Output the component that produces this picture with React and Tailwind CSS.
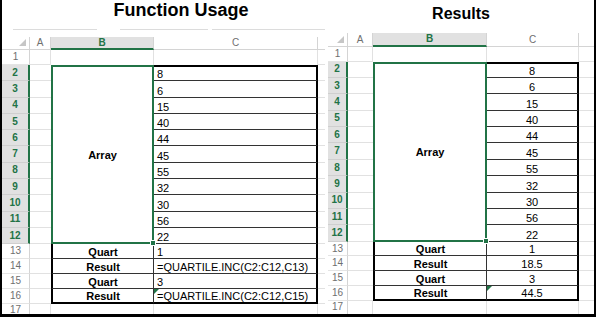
const nums = ['8', '6', '15', '40', '44', '45', '55', '32', '30', '56', '22'];

function RowHead({ n, selected, top }) {
  if (selected) {
    return (
      <div className="flex items-center justify-center bg-[#e1e1e1] border-r-2 border-r-[#217346] border-b border-b-[#cfcfcf] text-[10px] leading-[10px] font-bold text-[#217346]">
        {n}
      </div>
    );
  }
  return (
    <div
      className={`flex justify-center border-r border-r-[#d4d4d4] border-b border-b-[#e4e4e4] text-[10px] leading-[10px] text-[#6f6f6f] ${
        top ? 'items-start pt-px' : 'items-center'
      }`}
    >
      {n}
    </div>
  );
}

function ColHead({ label, selected }) {
  return selected ? (
    <div className="flex items-center justify-center bg-[#e1e1e1] border-r border-r-[#d4d4d4] border-b-2 border-b-[#217346] text-[10px] font-bold text-[#217346]">
      {label}
    </div>
  ) : (
    <div className="flex items-center justify-center border-r border-r-[#d4d4d4] border-b border-b-[#d4d4d4] text-[10px] text-[#6f6f6f]">
      {label}
    </div>
  );
}

function Sheet({ grid, extra, center }) {
  const pos = center ? 'justify-center' : 'justify-start pl-[3px]';
  return (
    <div className={`grid shrink-0 ${grid} text-[11px] leading-[12px] text-black`}>
      <div className="flex items-end justify-end pr-[3px] pb-[3px] border-r border-b border-[#d4d4d4]">
        <svg width="7" height="7" viewBox="0 0 7 7">
          <polygon points="7,0 7,7 0,7" fill="#c6c6c6" />
        </svg>
      </div>
      <ColHead label="A" />
      <ColHead label="B" selected />
      <ColHead label="C" />
      <div className="border-b border-b-[#d4d4d4]" />

      <RowHead n={1} />
      <div className="border-r border-b border-[#e1e1e1]" />
      <div className="border-r border-r-[#e1e1e1]" />
      <div className="border-r border-r-[#e1e1e1]" />
      <div className="border-b border-b-[#e1e1e1]" />

      {nums.map((v, i) => (
        <Row2 key={v + i} i={i} v={v} pos={pos} />
      ))}

      {extra.map(([label, value], i) => (
        <Extra key={i} n={13 + i} label={label} value={value} last={i === extra.length - 1} pos={pos} />
      ))}

      <RowHead n={17} top />
      <div className="border-r border-r-[#e1e1e1]" />
      <div className="border-r border-r-[#e1e1e1]" />
      <div className="border-r border-r-[#e1e1e1]" />
      <div />
    </div>
  );
}

function Row2({ i, v, pos }) {
  return (
    <>
      <RowHead n={i + 2} selected />
      <div className="border-b border-b-[#e1e1e1]" />
      {i === 0 && (
        <div className="relative row-span-11 flex items-center justify-center border-2 border-[#217346] font-bold">
          Array
          <span className="absolute -bottom-[4px] -right-[4px] w-[6px] h-[6px] bg-[#217346] border border-white" />
        </div>
      )}
      <div
        className={`flex items-end ${pos} border-r-2 border-r-black border-b border-b-[#333] ${
          i === 0 ? 'border-t-2 border-t-black' : ''
        }`}
      >
        {v}
      </div>
      <div className="border-b border-b-[#e1e1e1]" />
    </>
  );
}

function Extra({ n, label, value, last, pos }) {
  return (
    <>
      <RowHead n={n} />
      <div className="border-b border-b-[#e1e1e1]" />
      <div
        className={`flex items-end justify-center font-bold border-l-2 border-l-black border-r border-r-[#333] ${
          last ? 'border-b-2 border-b-black' : 'border-b border-b-[#333]'
        }`}
      >
        {label}
      </div>
      <div
        className={`relative flex items-end ${pos} border-r-2 border-r-black ${
          last ? 'border-b-2 border-b-black' : 'border-b border-b-[#333]'
        }`}
      >
        {last && (
          <svg className="absolute top-0 left-0" width="5" height="5" viewBox="0 0 5 5">
            <polygon points="0,0 5,0 0,5" fill="#217346" />
          </svg>
        )}
        {value}
      </div>
      <div className="border-b border-b-[#e1e1e1]" />
    </>
  );
}

export default function App() {
  return (
    <div className="w-[596px] h-[319px] bg-white">
      <div className="flex w-[596px] h-[317px] border-x-2 border-b-[3px] border-black overflow-hidden font-['Liberation_Sans',Arial,sans-serif]">
        <div className="w-[323px] flex flex-col overflow-hidden">
          <div className="h-[29px] shrink-0 pl-[35px] pt-px text-center text-[18px] leading-[18px] font-bold text-black">
            Function Usage
          </div>
          <div className="flex h-px shrink-0">
            <div className="ml-[11px] w-[84px] bg-[#dcdcdc]" />
            <div className="ml-[23px] w-[88px] bg-[#dcdcdc]" />
            <div className="ml-[4px] flex-1 bg-[#dcdcdc]" />
          </div>
          <div className="h-[7px] shrink-0" />
          <Sheet
            grid="grid-cols-[28px_21px_103px_164px_7px] grid-rows-[13px_15px_repeat(11,16.3px)_repeat(4,15px)_15px]"
            extra={[
              ['Quart', '1'],
              ['Result', '=QUARTILE.INC(C2:C12,C13)'],
              ['Quart', '3'],
              ['Result', '=QUARTILE.INC(C2:C12,C15)'],
            ]}
          />
        </div>
        <div className="w-[269px] flex flex-col overflow-hidden pl-[3px]">
          <div className="h-[33px] shrink-0 pt-[6px] text-center text-[16px] leading-[16px] font-bold text-black">
            Results
          </div>
          <Sheet
            center
            grid="grid-cols-[20px_25px_114px_92px_15px] grid-rows-[14px_14.7px_repeat(11,16.36px)_repeat(4,14.75px)_15px]"
            extra={[
              ['Quart', '1'],
              ['Result', '18.5'],
              ['Quart', '3'],
              ['Result', '44.5'],
            ]}
          />
        </div>
      </div>
    </div>
  );
}
